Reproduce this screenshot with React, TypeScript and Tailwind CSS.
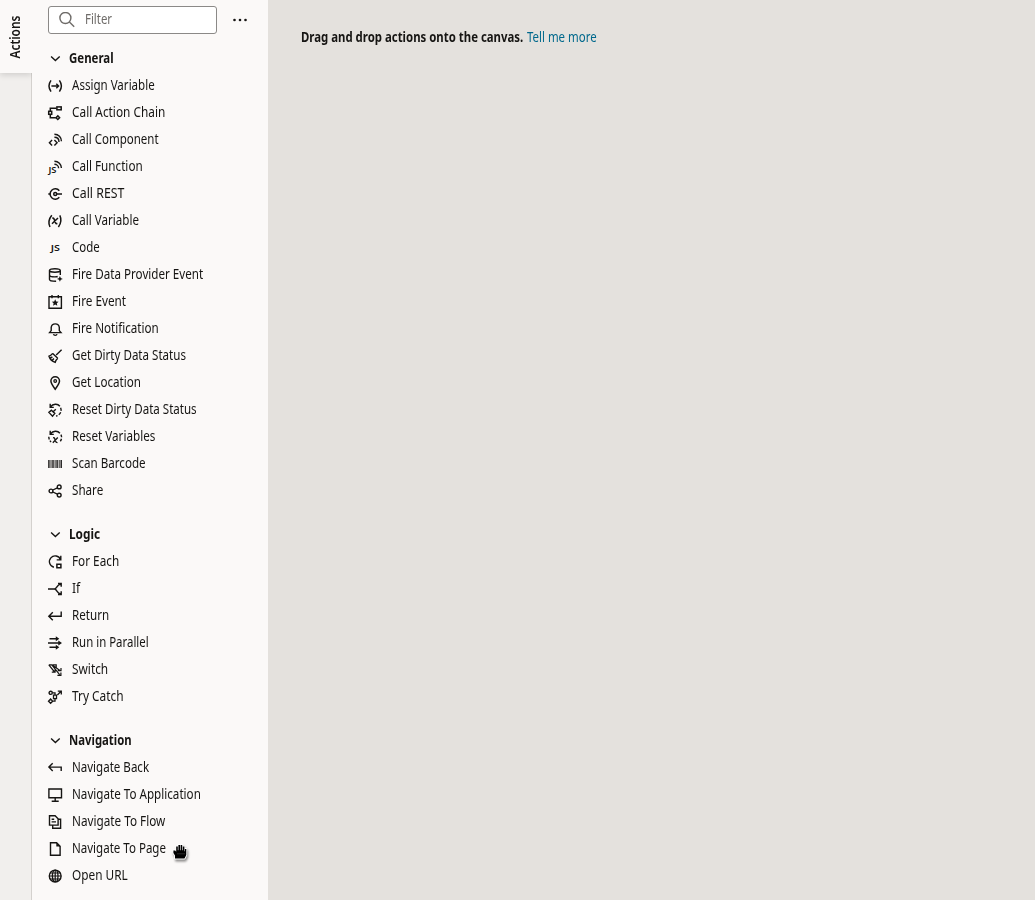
import { useLayoutEffect, useRef } from "react";
import type { ReactNode } from "react";

/** A single line of text condensed horizontally to a given width. */
function Fit({ w, children, className = "" }: { w: number; children: ReactNode; className?: string }) {
  const ref = useRef<HTMLSpanElement>(null);
  useLayoutEffect(() => {
    const el = ref.current;
    if (el) el.style.transform = `scaleX(${w / el.offsetWidth})`;
  }, [w]);
  return (
    <span className={`block shrink-0 whitespace-nowrap ${className}`} style={{ width: w }}>
      <span ref={ref} className="block w-max origin-left">{children}</span>
    </span>
  );
}

const dot = { fill: "currentColor", stroke: "none" };
const js = { fill: "currentColor", stroke: "none", fontFamily: "Noto Sans, sans-serif", fontWeight: 600 };

const icons: Record<string, ReactNode> = {
  assign: <><path d="M3 1.4Q-1 7 3 12.6M11.4 1.4Q15.4 7 11.4 12.6" strokeWidth="1.5" /><path d="M3.4 7h7M8.3 4.8 10.6 7 8.3 9.2" strokeWidth="1.4" /></>,
  chain: <><path d="M8.5 2.3H2.3v3M2.3 8.5v3.2h5.5" strokeWidth="1.5" /><rect x=".7" y="5.3" width="3" height="3" strokeWidth="1.5" /><rect x="8.9" y=".9" width="4.3" height="2.9" strokeWidth="1.5" /><path d="m9.8 9.9 1.8 1.8-1.8 1.8L8 11.7z" strokeWidth="1.5" /></>,
  component: <path d="M4.1 7 1.4 9.7l2.7 2.8M6.4 7l2.7 2.7-2.7 2.8M6.4 4.3c2.7 0 4.6 1.9 4.6 4.7M6.4 1.2c4.2 0 7 3 7 7" strokeWidth="1.4" />,
  func: <><text x=".5" y="13.2" fontSize="8.2" textLength="8" lengthAdjust="spacingAndGlyphs" style={js}>JS</text><path d="M6.4 4.3c2.3 0 4.2 1.8 4.2 4M6.4 1.2c4 0 7 2.9 7 6.8" strokeWidth="1.4" /></>,
  rest: <><path d="M11.3 3.7A5.2 5.2 0 1 0 11.3 10.3" strokeWidth="1.5" /><circle cx="7.2" cy="7" r="1.5" strokeWidth="1.5" /><path d="M.3 7h1.8M8.5 7H14" strokeWidth="1.5" /></>,
  variable: <><path d="M3.8 1.3Q-.9 7 2 13M11.8 1.3Q14.6 7 10.4 13" strokeWidth="1.5" /><path d="M4.3 4.2q1.3-.3 1.7.7l1.6 4q.4 1 1.8.7M10 4 4 9.8" strokeWidth="1.5" /></>,
  code: <text x="2.7" y="10" fontSize="8.8" textLength="9.2" lengthAdjust="spacingAndGlyphs" style={js}>JS</text>,
  data: <><ellipse cx="6.9" cy="2.5" rx="5.4" ry="1.8" strokeWidth="1.4" /><path d="M1.5 2.5v8.9c0 1 2.4 1.8 6.6 1.8M12.3 2.5v4.5M1.5 7c0 1.1 2.4 1.9 5.4 1.9 1.2 0 2.1-.1 2.8-.4" strokeWidth="1.4" /><path d="m11.9 8 .9 2 2 .9-2 .9-.9 2-.9-2-2-.9 2-.9z" style={dot} /></>,
  event: <><path d="M1 1.8h12.4v11.4H1zM4 0v3.3M10.3 0v3.3" strokeWidth="1.4" /><path d="m7.2 4.2 1 2.2 2.4.3-1.8 1.6.5 2.4-2.1-1.2-2.1 1.2.5-2.4-1.8-1.6 2.4-.3z" style={dot} /></>,
  bell: <path d="M1.6 10.6h11.4l-1.7-2V5.3a4.1 4.1 0 0 0-8.1 0v3.3zM5.5 12.2c.3 1.5 3.2 1.5 3.5 0" strokeWidth="1.4" />,
  dirty: <><path d="M8.2 6 13.6.8M4.7 4.4l5 4.9M4.7 4.4C3.2 6.2 2 7 1 7.2c1 3.2 3 5.2 6.2 6.1.4-1.8 1.2-2.8 2.6-4M2.4 9l2-1M4.2 11.5l1.7-2" strokeWidth="1.4" /></>,
  location: <><path d="M7.2 13.2C4.5 9.7 2.9 7.4 2.9 5.1a4.3 4.3 0 0 1 8.6 0c0 2.3-1.6 4.6-4.3 8.1z" strokeWidth="1.5" /><circle cx="7.2" cy="5" r="1.3" /></>,
  resetDirty: <><path d="M2.2.7v3.7h3.6M2.4 3.9C5 .7 9.5.2 11.9 3.2" strokeWidth="1.4" /><path d="M12.6 4.7A6 6 0 0 1 8 13" strokeDasharray="3.2 1.4" strokeWidth="1.4" /><path d="M3.4 7.2 6.8 10.4 4.5 13.2 .9 9.4zM5.2 8.8l2.6-2.6" strokeWidth="1.4" /></>,
  resetVar: <><path d="M2.2.7v3.7h3.6M2.4 3.9C5 .7 9.5.2 11.9 3.2" strokeWidth="1.4" /><path d="M12.9 4.7a6 6 0 0 1-.6 6.5M.8 6.8q0 3 2.3 5.2" strokeDasharray="2.7 1.4" strokeWidth="1.4" /><path d="m5 7.6 1.3.3 1.9 4.4 1.3.3M9.8 7.5l-5 5.2" strokeWidth="1.3" /></>,
  barcode: <><path d="M.9 3v8M5 3v8M9.1 3v8M13.2 3v8" strokeWidth="1.4" /><path d="M3 3v8M7.1 3v8M11.2 3v8" strokeWidth=".9" /></>,
  share: <><circle cx="3" cy="7" r="1.9" strokeWidth="1.4" /><circle cx="11.2" cy="2.9" r="1.9" strokeWidth="1.4" /><circle cx="11.2" cy="11.1" r="1.9" strokeWidth="1.4" /><path d="m4.8 6 4.6-2.2M4.8 8l4.6 2.2" /></>,
  each: <><path d="M12.8.8v4.1H8.7M12.5 4.7A5.7 5.7 0 1 0 5.9 12.2" strokeWidth="1.4" /><path d="M8.9 9.2h4v3.5h-4z" strokeWidth="1.5" /></>,
  branch: <path d="M0 7h6.5C9 7 9 2.2 12.5 2.2M6.5 7C9 7 9 11.8 12.5 11.8M10 1.4h3.2v3.4M10 12.6h3.2V9.2" strokeWidth="1.4" />,
  return: <path d="M13.2 2.5v4.7H.9M4.8 3.2.8 7.2l4 4" strokeWidth="1.4" />,
  parallel: <><path d="M1.5 2.8H9M0 7h12M1.5 11.2H9" strokeWidth="1.4" /><path d="M7.8.3 11.3 2.8 7.8 5.3zM10.3 4.5 14 7l-3.7 2.5zM7.8 8.7l3.5 2.5-3.5 2.5z" style={dot} /></>,
  switch: <path d="M.8 1.8h3l7.8 9.8M.8 1.8l5.8 7.2M3.8 1.8 12 7.4M4.8 1.8h3.4v2.8M9.8 7.6h3.2V4.9M3.8 9.2h3.3V6.4M9.4 12.3h3.5V9.4" strokeWidth="1.2" />,
  catch: <><circle cx="2.7" cy="2.8" r="1.6" strokeWidth="1.4" /><path d="M4.5 2.8H7v2.1M7 8.8v2.4H4.5M2.6 9l2.1 2.2-2.1 2.1-2.1-2.1zM5.5 5.2h3v3.5h-3zM9.4 5l3.4-3.5M9.8 1.1h3.5v3.5" strokeWidth="1.3" /></>,
  back: <path d="M4.7 2.3.9 6.1l3.8 3.8M.9 6.1h12.3V10" strokeWidth="1.4" />,
  app: <path d="M.9 1h12.6v8.8H.9zM7.2 9.8V13M3.7 13.2h7" strokeWidth="1.4" />,
  flow: <path d="M1.5.8h5.6l3 3v6.3H1.5zM3.6 4.3h2.6M3.6 6.9H8M10.1 4.3h2.5v8.9H4.7v-3" strokeWidth="1.4" />,
  page: <><path d="M2.5.8h6.1L12.1 4.4v8.8H2.5z" strokeWidth="1.4" /><path d="M8.3.8v3.8h3.8z" style={dot} /></>,
  globe: <><circle cx="7.2" cy="7" r="5.9" strokeWidth="1.4" /><ellipse cx="7.2" cy="7" rx="2.8" ry="5.9" /><path d="M1.2 7h12M2 4h10.4M2 10h10.4M7.2 1v12" strokeWidth="1.2" /></>,
};

const sections: { title: string; w: number; items: [string, string, number][] }[] = [
  {
    title: "General", w: 45, items: [
      ["assign", "Assign Variable", 83], ["chain", "Call Action Chain", 93], ["component", "Call Component", 87],
      ["func", "Call Function", 71], ["rest", "Call REST", 52], ["variable", "Call Variable", 67], ["code", "Code", 28],
      ["data", "Fire Data Provider Event", 131], ["event", "Fire Event", 54], ["bell", "Fire Notification", 87],
      ["dirty", "Get Dirty Data Status", 114], ["location", "Get Location", 69], ["resetDirty", "Reset Dirty Data Status", 125],
      ["resetVar", "Reset Variables", 83], ["barcode", "Scan Barcode", 74], ["share", "Share", 31],
    ],
  },
  {
    title: "Logic", w: 31.5, items: [
      ["each", "For Each", 47], ["branch", "If", 8], ["return", "Return", 37], ["parallel", "Run in Parallel", 77],
      ["switch", "Switch", 36], ["catch", "Try Catch", 52],
    ],
  },
  {
    title: "Navigation", w: 63, items: [
      ["back", "Navigate Back", 77], ["app", "Navigate To Application", 128.5], ["flow", "Navigate To Flow", 93],
      ["page", "Navigate To Page", 94], ["globe", "Open URL", 56],
    ],
  },
];

function Icon({ name }: { name: string }) {
  return (
    <svg viewBox="0 0 14 14" className="h-3.5 w-3.5 shrink-0 overflow-visible" fill="none" stroke="currentColor" strokeWidth="1.3">
      {icons[name]}
    </svg>
  );
}

function GrabCursor() {
  return (
    <svg viewBox="0 0 16 17" className="absolute left-[172px] top-[843px] h-[17px] w-4 overflow-visible drop-shadow-[1px_2px_1px_rgba(0,0,0,0.45)]">
      <path d="M3 15.5V12.5L1.4 10V7.5h1.8l1 1.3V3.4h1.6v3.8h.6V2h1.6v5.2h.6V2h1.6v5.2h.6V3.6h1.6v4.6h.5V6h1.4v6L12.5 15.5z" fill="#000" stroke="#fff" strokeWidth="1.8" strokeLinejoin="round" paintOrder="stroke" />
      <path d="M5.5 10.8h7" stroke="#777" strokeWidth=".7" strokeDasharray="1 1" />
    </svg>
  );
}

export default function App() {
  return (
    <div className="relative flex h-[900px] w-[1035px] overflow-hidden bg-[#e4e1dd] font-['Noto_Sans',sans-serif] text-[13.5px] leading-[20px] text-[#161513]">
      <aside className="flex w-8 shrink-0 flex-col overflow-hidden bg-[#f1efed]">
        <div className="z-10 flex h-[73px] items-center justify-center bg-[#fbf9f8] pr-1 shadow-[0_2px_6px_rgba(0,0,0,0.14)]">
          <div className="flex h-[42px] w-5 items-center justify-center">
            <div className="-rotate-90"><Fit w={43} className="font-semibold">Actions</Fit></div>
          </div>
        </div>
        <div className="flex-1 border-r border-[#d4d1ce]" />
      </aside>
      <nav className="w-[236px] shrink-0 bg-[#fbf9f8] pl-4 pt-1.5">
        <div className="flex items-center">
          <div className="flex h-7 w-[169px] items-center rounded-[3px] border border-[#8b8987] bg-white pl-2.5 text-[#6f6c69]">
            <svg viewBox="0 0 16 16" className="mr-[10px] h-4 w-4 shrink-0" fill="none" stroke="currentColor" strokeWidth="1.4">
              <circle cx="6.4" cy="6" r="5.5" /><path d="m10.4 10 4.8 4.8" />
            </svg>
            <Fit w={27} className="pb-0.5">Filter</Fit>
          </div>
          <svg viewBox="0 0 14 4" className="ml-[15.5px] h-1 w-3.5" fill="currentColor">
            <circle cx="1.5" cy="2" r="1.3" /><circle cx="7" cy="2" r="1.3" /><circle cx="12.5" cy="2" r="1.3" />
          </svg>
        </div>
        <div className="mt-[11px] flex flex-col gap-[17px]">
          {sections.map((s) => (
            <section key={s.title}>
              <h2 className="flex h-[27px] items-center font-bold">
                <svg viewBox="0 0 14 14" className="mr-[7px] h-3.5 w-3.5" fill="none" stroke="currentColor" strokeWidth="1.4"><path d="m3.1 4.6 4.3 4 4.3-4" /></svg>
                <Fit w={s.w} className="pb-px">{s.title}</Fit>
              </h2>
              <ul>
                {s.items.map(([icon, label, w]) => (
                  <li key={label} className="flex h-[27px] items-center gap-[10px]">
                    <Icon name={icon} />
                    <Fit w={w} className="pb-px">{label}</Fit>
                  </li>
                ))}
              </ul>
            </section>
          ))}
        </div>
      </nav>
      <main className="flex flex-1 gap-1 pl-[33px] pt-[27px]">
        <Fit w={222} className="font-bold">Drag and drop actions onto the canvas.</Fit>
        <a href="#" className="text-[#00688c]"><Fit w={69.5}>Tell me more</Fit></a>
      </main>
      <GrabCursor />
    </div>
  );
}
